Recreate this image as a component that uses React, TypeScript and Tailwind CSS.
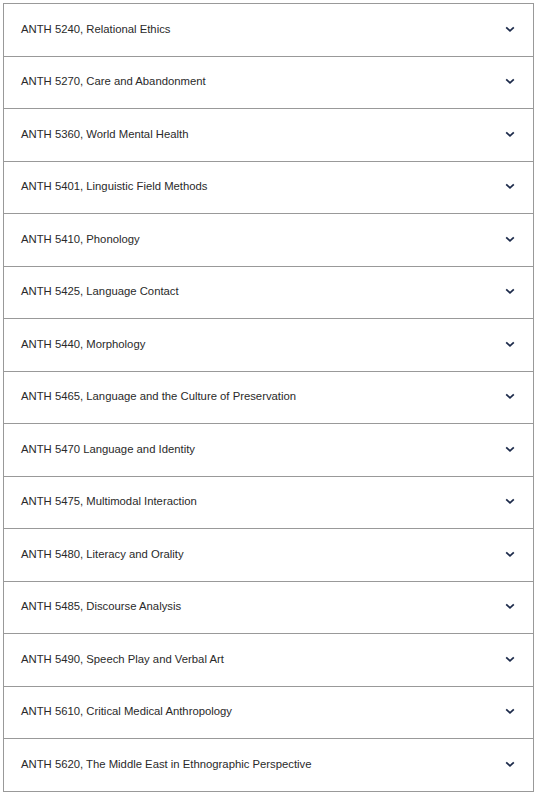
import React from "react";

const items = [
  "ANTH 5240, Relational Ethics",
  "ANTH 5270, Care and Abandonment",
  "ANTH 5360, World Mental Health",
  "ANTH 5401, Linguistic Field Methods",
  "ANTH 5410, Phonology",
  "ANTH 5425, Language Contact",
  "ANTH 5440, Morphology",
  "ANTH 5465, Language and the Culture of Preservation",
  "ANTH 5470 Language and Identity",
  "ANTH 5475, Multimodal Interaction",
  "ANTH 5480, Literacy and Orality",
  "ANTH 5485, Discourse Analysis",
  "ANTH 5490, Speech Play and Verbal Art",
  "ANTH 5610, Critical Medical Anthropology",
  "ANTH 5620, The Middle East in Ethnographic Perspective",
];

function Chevron() {
  return (
    <svg width="10" height="7" viewBox="0 0 10 7" fill="none">
      <path d="M1.2 1.3 L5 4.9 L8.8 1.3" stroke="#1c2a4a" strokeWidth="1.7" />
    </svg>
  );
}

export default function App() {
  return (
    <div className="bg-white min-h-[793px] pt-[3px] pl-[3px]" style={{ fontFamily: '"Liberation Sans", Arial, sans-serif' }}>
      <div className="w-[531px] border-b border-[#999]">
        {items.map((t) => (
          <div
            key={t}
            className="h-[52.5px] border-t border-l border-r border-[#999] flex items-center justify-between pl-[17px] pr-[18px] pb-[1px]"
          >
            <span className="text-[11.3px] text-[#2a2a2a] leading-none">{t}</span>
            <Chevron />
          </div>
        ))}
      </div>
    </div>
  );
}
